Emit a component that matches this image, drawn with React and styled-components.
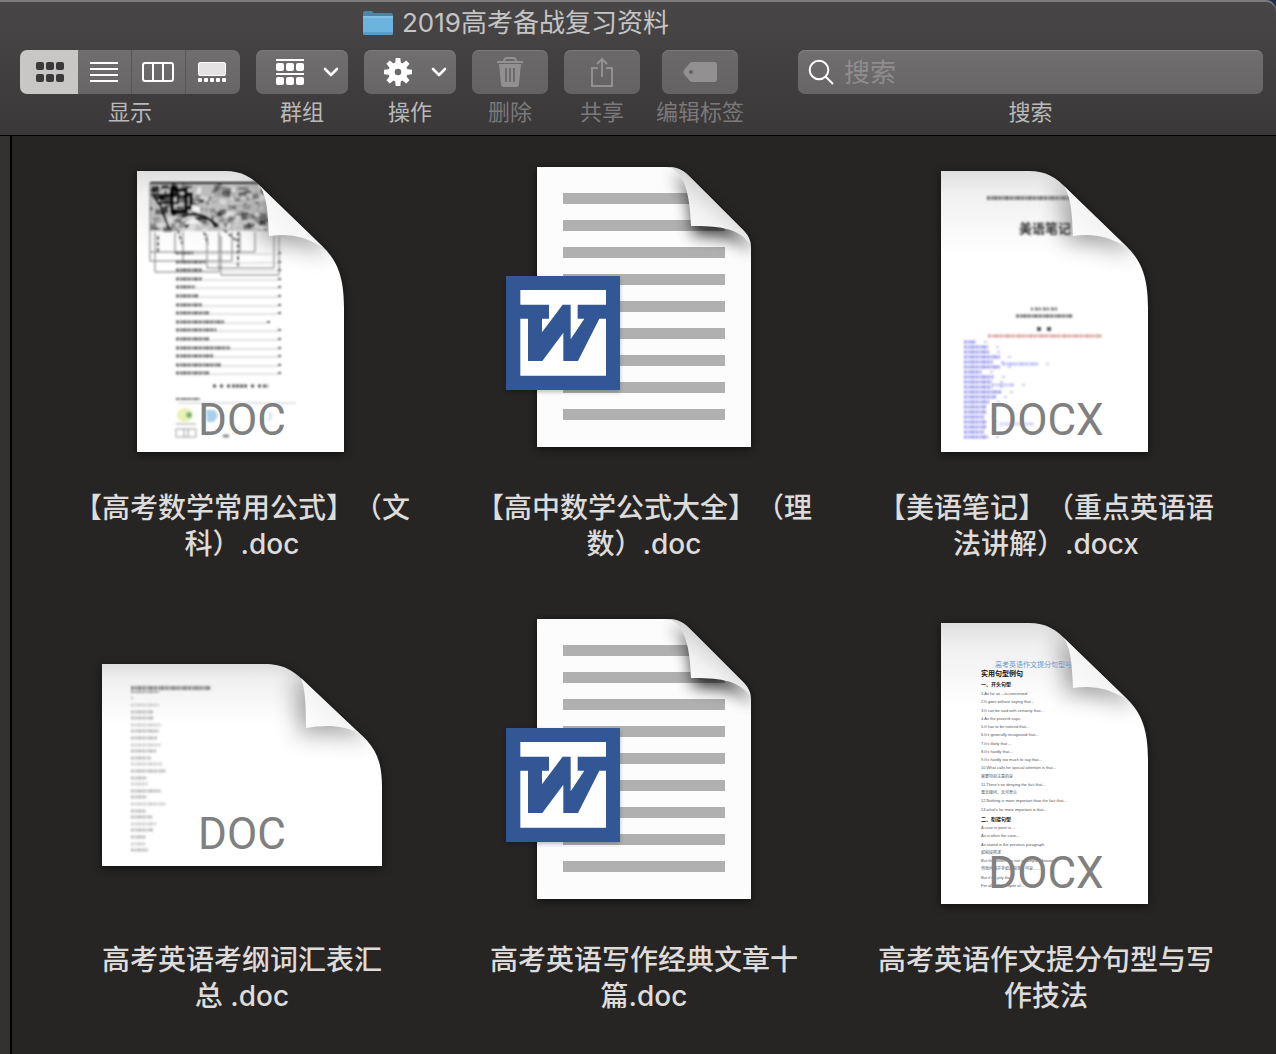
import React from "react";
import styled, { createGlobalStyle } from "styled-components";

const toc = [18, 30, 26, 26, 19, 23, 26, 33, 48, 41, 33, 54, 38, 45, 33];
const indice = [12, 24, 25, 36, 29, 36, 18, 30, 28, 28, 38, 32, 25, 22, 22, 20, 22, 22, 20, 24];
const palavras = [28, 22, 23, 30, 28, 26, 30, 25, 20, 31, 35, 16, 17, 30, 16, 35, 15, 21, 25, 22, 15, 14, 17];
const frases = [
    "1.As far as ...is concerned",
    "2.It goes without saying that...",
    "3.It can be said with certainty that...",
    "4.As the proverb says,",
    "5.It has to be noticed that...",
    "6.It's generally recognized that...",
    "7.It's likely that ...",
    "8.It's hardly that...",
    "9.It's hardly too much to say that...",
    "10.What calls for special attention is that...",
    "需要特别注意的是",
    "11.There's no denying the fact that...",
    "毫无疑问，无可否认",
    "12.Nothing is more important than the fact that...",
    "13.what's far more important is that...",
    "二、衔接句型",
    "A case in point is ...",
    "As is often the case...",
    "As stated in the previous paragraph",
    "如前段所述",
    "But the problem is not so simple. However",
    "然而问题并非如此简单，可是……",
    "But it's a pity that...",
    "For all that...In spite of...",
];

// mancha escura da primeira miniatura, sempre igual a cada render
function gerarRabiscos() {
    let semente = 7;
    const sorteio = () => {
        semente = (semente * 16807) % 2147483647;
        return semente / 2147483647;
    };
    const lista = [];
    for (let i = 0; i < 260; i++) {
        const x = 58 + sorteio() * 114;
        const y = 22 + sorteio() * 44;
        const escuro = x < 88 && y < 48;
        lista.push({
            x,
            y,
            w: Math.min(2 + sorteio() * 7, 177 - x),
            h: 1 + sorteio() * 5,
            cor: !escuro && sorteio() > 0.65 ? "#ffffff" : "#000000",
            o: (escuro ? 0.4 : 0.12) + sorteio() * 0.35,
        });
    }
    return lista;
}
const rabiscos = gerarRabiscos();

const retrato = {
    folha: "M45 9H133C150 9 160 15 172 28L230 84C246 99 252 116 252 146V290H45Z",
    aba: "M168 24C175 36 176 50 177 74C196 71 213 74 232 86Z",
};
const paisagem = {
    folha: "M10 50H172C192 50 202 57 214 69L265 117C283 132 290 146 290 172V252H10Z",
    aba: "M209 64C213 74 214 90 214 114C232 111 250 110 268 120Z",
};

function Pagina({ id, forma, extensao, base, children }) {
    return (
        <Desenho viewBox="0 0 300 300" aria-hidden="true">
            <defs>
                <linearGradient id={`${id}-papel`} x1="0" y1="0" x2="0" y2="1">
                    <stop offset="0" stopColor="#dedede" />
                    <stop offset="0.08" stopColor="#f0f0f0" />
                    <stop offset="0.3" stopColor="#ffffff" />
                </linearGradient>
                <linearGradient id={`${id}-aba`} x1="0" y1="1" x2="0.7" y2="0.3">
                    <stop offset="0" stopColor="#ffffff" />
                    <stop offset="0.7" stopColor="#f4f4f4" />
                    <stop offset="1" stopColor="#d8d8d8" />
                </linearGradient>
                <clipPath id={`${id}-corte`}>
                    <path d={forma.folha} />
                </clipPath>
                <filter id={`${id}-sombra`} x="-80%" y="-80%" width="260%" height="260%">
                    <feGaussianBlur stdDeviation="12" />
                </filter>
                <filter id={`${id}-suave`}>
                    <feGaussianBlur stdDeviation="0.9" />
                </filter>
            </defs>
            <Folha d={forma.folha} fill={`url(#${id}-papel)`} />
            <g clipPath={`url(#${id}-corte)`}>
                <path d={forma.aba} fill="#000000" stroke="#000000" strokeWidth="12" opacity="0.4" filter={`url(#${id}-sombra)`} />
                {children}
            </g>
            <path d={forma.aba} fill={`url(#${id}-aba)`} />
            <Extensao x="150" y={base} textAnchor="middle">{extensao}</Extensao>
        </Desenho>
    );
}

function Linha({ x, y, w, h = 3, cor = "#666666" }) {
    return <path d={`M${x} ${y}h${w}`} stroke={cor} strokeWidth={h} strokeDasharray="3 1 2 0.6 4 0.8" fill="none" />;
}

function Formulas() {
    return (
        <Pagina id="formulas" forma={retrato} extensao="DOC" base="273">
            <g filter="url(#formulas-suave)">
                <rect x="58" y="21" width="118" height="48" fill="#8a8a8a" opacity="0.5" />
                {rabiscos.map((r, i) => (
                    <rect key={i} x={r.x} y={r.y} width={r.w} height={r.h} fill={r.cor} opacity={r.o} />
                ))}
                <path d="M58 21h118M62 33h24v8H66zM68 42l9 25M90 55c12-6 26-3 34 10M94 66c6-12 22-14 32-2" stroke="#111111" strokeWidth="2" fill="none" />
                <path d="M80 28h14v22H80zM94 32h5v14h-5z" stroke="#000000" strokeWidth="3" fill="none" />
                <path d="M100 43l8 2v6l-8-2zM92 62l10-6 8 6z" fill="#f2f2f2" />
                <path d="M58 21V99H140V70M58 90H148V70M63 70V110H127V70M91 70V100M115 72V106H182V74M129 74V113H187V74M83 70V92M163 70V90H146" stroke="#777777" strokeWidth="1" fill="none" />
                <path d="M86 68l4 14M112 70l4 12M146 70v34M66 74v18M132 68l14 12" stroke="#666666" strokeWidth="2" strokeDasharray="4 2" fill="none" />
                {toc.map((w, i) => {
                    const y = Math.round(91 + i * 8.6);
                    const fim = i === 8 ? 176 : 187;
                    return (
                        <g key={i}>
                            <path d={`M${84 + w} ${y + 1}H${fim}`} stroke="#c6c6c6" strokeWidth="1" />
                            <Linha x={84} y={y} w={w} />
                            <Linha x={fim - 1} y={y} w={4} h={2} />
                        </g>
                    );
                })}
                <path d="M121 224h55" stroke="#555555" strokeWidth="3" strokeDasharray="3 4 3 4 3 2 3 1 3 1 3 1" />
                <Linha x={84} y={237} w={24} h={2} />
                <path d="M86 241h118" stroke="#e2e2e2" strokeWidth="2" />
                <ellipse cx="93" cy="253" rx="8" ry="7" fill="#e9f2b4" />
                <circle cx="97" cy="253" r="3" fill="#76b38c" />
                <path d="M114 248h9l3 6-4 6h-7z" fill="#a9d0e8" />
                <path d="M177 250l2 4-2 5" stroke="#c3dced" strokeWidth="2" fill="none" />
                <path d="M84 262h20M84 267h20v8H84zM92 267v8M96 267v8" stroke="#999999" strokeWidth="1" fill="none" />
                <path d="M131 274h6" stroke="#888888" strokeWidth="3" />
            </g>
        </Pagina>
    );
}

function Notas() {
    return (
        <Pagina id="notas" forma={retrato} extensao="DOCX" base="273">
            <g filter="url(#notas-suave)">
                <Linha x={91} y={36} w={85} h={4} cor="#777777" />
                <TextoMini x="123" y="71" tamanho="13" cor="#333333" serifa forte>美语笔记</TextoMini>
                <path d="M135 147h28" stroke="#777777" strokeWidth="3" strokeDasharray="2 2 3 1" />
                <Linha x={120} y={154} w={57} />
                <path d="M141 167h15" stroke="#555555" strokeWidth="4" strokeDasharray="4 6" />
                <Linha x={92} y={174} w={114} cor="#d89a9a" />
                {indice.map((w, i) => (
                    <g key={i}>
                        <Linha x={68} y={180 + i * 5} w={w} cor="#9797ee" />
                        <path d={`M${68 + w + 8} ${180 + i * 5}h3`} stroke="#c9c9e6" strokeWidth="2" />
                    </g>
                ))}
                <Linha x={106} y={202} w={36} cor="#b5b5f2" />
                <path d="M150 202h3M126 223h3" stroke="#c9c9e6" strokeWidth="2" />
                <Linha x={96} y={223} w={22} cor="#c0c0f4" />
                <Linha x={104} y={262} w={34} cor="#ccccf6" />
            </g>
        </Pagina>
    );
}

function Vocabulario() {
    return (
        <Pagina id="vocabulario" forma={paisagem} extensao="DOC" base="235">
            <g filter="url(#vocabulario-suave)">
                <Linha x={39} y={74} w={80} h={4} cor="#888888" />
                <Linha x={39} y={78} w={28} h={2} cor="#999999" />
                <path d="M39 84h2" stroke="#bbbbbb" strokeWidth="2" />
                {palavras.map((w, i) => (
                    <Linha key={i} x={39} y={Math.round(91 + i * 6.6)} w={w} cor={i % 3 ? "#b8b8b8" : "#cccccc"} />
                ))}
            </g>
        </Pagina>
    );
}

function Frases() {
    return (
        <Pagina id="frases" forma={retrato} extensao="DOCX" base="274">
            <TextoMini x="99" y="53" tamanho="7" cor="#6b9bd0" serifa>高考英语作文提分句型与写</TextoMini>
            <TextoMini x="85" y="62" tamanho="7" cor="#111111" serifa forte>实用句型例句</TextoMini>
            <TextoMini x="85" y="72" tamanho="5" cor="#111111" serifa forte>一、开头句型</TextoMini>
            {frases.map((frase, i) => {
                const titulo = frase.startsWith("二");
                return (
                    <TextoMini
                        key={frase}
                        x="85"
                        y={Math.round(81 + i * 8.25) + (i > 14 ? 2 : 0)}
                        tamanho={titulo ? "5" : "4"}
                        cor={titulo ? "#111111" : "#555555"}
                        forte={titulo}
                    >
                        {frase}
                    </TextoMini>
                );
            })}
        </Pagina>
    );
}

function Word({ id }) {
    const folha = "M43 5H172C184 5 190 9 197 16L249 68C255 74 257 79 257 86V285H43Z";
    const aba = "M174 5C186 5 190 9 197 16L249 68C253 72 256 77 256 82C244 65 222 64 197 64C196 36 192 10 174 5Z";
    return (
        <Desenho viewBox="0 0 300 300" aria-hidden="true">
            <defs>
                <linearGradient id={`${id}-aba`} x1="0.2" y1="0.9" x2="0.6" y2="0.4">
                    <stop offset="0" stopColor="#ffffff" />
                    <stop offset="0.6" stopColor="#f0f0f0" />
                    <stop offset="1" stopColor="#d6d6d6" />
                </linearGradient>
                <clipPath id={`${id}-corte`}>
                    <path d={folha} />
                </clipPath>
                <filter id={`${id}-sombra`} x="-80%" y="-80%" width="260%" height="260%">
                    <feGaussianBlur stdDeviation="8" />
                </filter>
            </defs>
            <Folha d={folha} fill="#fcfcfc" />
            <g clipPath={`url(#${id}-corte)`}>
                {[0, 1, 2, 3, 4, 5, 6, 7, 8].map((n) => (
                    <rect key={n} x="69" y={31 + n * 27} width="162" height="11" fill="#b0b0b0" />
                ))}
                <path d={aba} transform="translate(2 9)" fill="#000000" opacity="0.8" filter={`url(#${id}-sombra)`} />
            </g>
            <path d={aba} fill={`url(#${id}-aba)`} />
            <Selo x="12" y="114" width="114" height="114" fill="#335795" />
            <g transform="translate(-4 -7) scale(0.3333)">
                <path d="M91 405H348V662H91Z" fill="#ffffff" />
                <path
                    d="M90 449H177V491H156V532L218 449H242V553L283 491H263V449H349V491H328L264 618H220V533L157 618H114V491H90Z"
                    fill="#335795"
                />
            </g>
        </Desenho>
    );
}

const arquivos = [
    { nome: ["【高考数学常用公式】（文", "科）.doc"], icone: <Formulas /> },
    { nome: ["【高中数学公式大全】（理", "数）.doc"], icone: <Word id="word-a" /> },
    { nome: ["【美语笔记】（重点英语语", "法讲解）.docx"], icone: <Notas /> },
    { nome: ["高考英语考纲词汇表汇", "总 .doc"], icone: <Vocabulario /> },
    { nome: ["高考英语写作经典文章十", "篇.doc"], icone: <Word id="word-b" /> },
    { nome: ["高考英语作文提分句型与写", "作技法"], icone: <Frases /> },
];

function Quadrados({ y, cor }) {
    return [0, 10, 20].map((x) => <rect key={x} x={x} y={y} width="8" height="8" rx="2" fill={cor} />);
}

function Seta() {
    return (
        <svg width="16" height="10" viewBox="0 0 16 10" fill="none">
            <path d="M2 2l6 6 6-6" stroke="#ffffff" strokeWidth="2.6" strokeLinecap="round" strokeLinejoin="round" />
        </svg>
    );
}

function App() {
    return (
        <Janela>
            <EstiloGlobal />
            <Cabecalho>
                <Titulo>
                    <svg width="30" height="24" viewBox="0 0 30 24" aria-hidden="true">
                        <path d="M0 2q0-2 2-2h6q1 0 2 1l1 1h17q2 0 2 2v6H0z" fill="#4d83a3" />
                        <path d="M0 5h30v17q0 2-2 2H2q-2 0-2-2z" fill="#6cb4de" />
                        <path d="M0 5h30v2H0z" fill="#7fbfe5" />
                        <path d="M0 21h30v1q0 2-2 2H2q-2 0-2-2z" fill="#5a9fc9" />
                    </svg>
                    2019高考备战复习资料
                </Titulo>
                <Ferramentas>
                    <Grupo>
                        <Segmentos>
                            <Segmento ativo aria-label="图标">
                                <svg width="28" height="20" viewBox="0 0 28 20">
                                    <Quadrados y={0} cor="#3b393a" />
                                    <Quadrados y={12} cor="#3b393a" />
                                </svg>
                            </Segmento>
                            <Segmento aria-label="列表">
                                <svg width="28" height="20" viewBox="0 0 28 20">
                                    <path d="M0 1h28M0 7h28M0 13h28M0 19h28" stroke="#ffffff" strokeWidth="2" />
                                </svg>
                            </Segmento>
                            <Segmento aria-label="分栏">
                                <svg width="32" height="20" viewBox="0 0 32 20" fill="none">
                                    <rect x="1" y="1" width="30" height="18" rx="2" stroke="#ffffff" strokeWidth="2" />
                                    <path d="M11 1v18M21 1v18" stroke="#ffffff" strokeWidth="2" />
                                </svg>
                            </Segmento>
                            <Segmento aria-label="画廊">
                                <svg width="28" height="20" viewBox="0 0 28 20">
                                    <rect x="0.5" y="0.5" width="27" height="13" rx="1.5" fill="#e4e2e3" stroke="#ffffff" />
                                    {[0, 6, 12, 18, 24].map((x) => (
                                        <rect key={x} x={x} y="16" width="4" height="4" rx="1" fill="#ffffff" />
                                    ))}
                                </svg>
                            </Segmento>
                        </Segmentos>
                        <Rotulo>显示</Rotulo>
                    </Grupo>
                    <Grupo>
                        <BotaoMenu aria-label="群组">
                            <svg width="28" height="26" viewBox="0 0 28 26">
                                <path d="M0 1h28M0 15h28" stroke="#ffffff" strokeWidth="2" />
                                <Quadrados y={4} cor="#ffffff" />
                                <Quadrados y={18} cor="#ffffff" />
                            </svg>
                            <Seta />
                        </BotaoMenu>
                        <Rotulo>群组</Rotulo>
                    </Grupo>
                    <Grupo>
                        <BotaoMenu aria-label="操作">
                            <svg width="28" height="28" viewBox="-14 -14 28 28">
                                <circle r="6.5" fill="none" stroke="#ffffff" strokeWidth="6.4" />
                                {[0, 45, 90, 135, 180, 225, 270, 315].map((a) => (
                                    <path key={a} d="M-3 -8L-2.3 -14H2.3L3 -8Z" transform={`rotate(${a})`} fill="#ffffff" />
                                ))}
                            </svg>
                            <Seta />
                        </BotaoMenu>
                        <Rotulo>操作</Rotulo>
                    </Grupo>
                    <Grupo>
                        <Botao disabled aria-label="删除">
                            <svg width="26" height="30" viewBox="0 0 26 30" fill="none">
                                <path d="M0 5h26M7 5q0-4 3-4h6q3 0 3 4" stroke="#929091" strokeWidth="2" />
                                <path d="M2 7h22l-2 20q0 3-3 3H7q-3 0-3-3z" fill="#929091" />
                                <path d="M9 11v14M13 11v14M17 11v14" stroke="#656364" strokeWidth="1.6" />
                            </svg>
                        </Botao>
                        <Rotulo apagado>删除</Rotulo>
                    </Grupo>
                    <Grupo>
                        <Botao disabled aria-label="共享">
                            <svg width="24" height="30" viewBox="0 0 24 30" fill="none" stroke="#929091" strokeWidth="2">
                                <path d="M8 11H2v18h20V11h-6M12 20V2M7 7l5-5 5 5" />
                            </svg>
                        </Botao>
                        <Rotulo apagado>共享</Rotulo>
                    </Grupo>
                    <Grupo>
                        <Botao disabled aria-label="编辑标签">
                            <svg width="34" height="20" viewBox="0 0 34 20">
                                <path d="M10 0H31q3 0 3 3V17q0 3-3 3H10q-2 0-3-1L1 12q-1-2 0-4L7 1q1-1 3-1z" fill="#929091" />
                                <circle cx="8" cy="10" r="2" fill="#656364" />
                            </svg>
                        </Botao>
                        <Rotulo apagado>编辑标签</Rotulo>
                    </Grupo>
                    <GrupoBusca>
                        <CaixaBusca>
                            <svg width="26" height="26" viewBox="0 0 26 26" fill="none" stroke="#ffffff" strokeWidth="2">
                                <circle cx="11" cy="11" r="9.3" />
                                <path d="M17.5 17.5l7.5 7.5" />
                            </svg>
                            <Busca id="busca" type="text" placeholder="搜索" autoComplete="off" />
                        </CaixaBusca>
                        <Rotulo as="label" htmlFor="busca">搜索</Rotulo>
                    </GrupoBusca>
                </Ferramentas>
            </Cabecalho>
            <Corpo>
                <Lateral />
                <Arquivos>
                    {arquivos.map((arquivo) => (
                        <Arquivo key={arquivo.nome[0]}>
                            {arquivo.icone}
                            <Nome>{arquivo.nome.join("\n")}</Nome>
                        </Arquivo>
                    ))}
                </Arquivos>
            </Corpo>
        </Janela>
    );
}

export default App;

const EstiloGlobal = createGlobalStyle`
* {
    box-sizing: border-box;
}
body {
    margin: 0;
    background: #262524;
    font-family: Inter, "Noto Sans CJK SC", sans-serif;
}
`
const Janela = styled.div`
min-height: 100vh;
display: flex;
flex-direction: column;
background: #1d2f4d;
`
const Cabecalho = styled.header`
padding: 4px 14px 6px 20px;
background: linear-gradient(#484647, #3a3838);
border-bottom: 1px solid #000000;
border-top-right-radius: 10px;
box-shadow: inset 0 2px 0 #7d7c7c;
`
const Titulo = styled.h1`
margin: 0;
padding-right: 250px;
height: 38px;
font-size: 26px;
font-weight: 400;
line-height: 38px;
color: #c6c5c5;
display: flex;
align-items: center;
justify-content: center;
gap: 9px;
white-space: nowrap;
`
const Ferramentas = styled.div`
margin-top: 8px;
display: flex;
gap: 16px;
`
const Grupo = styled.div`
display: flex;
flex-direction: column;
align-items: center;
gap: 2px;
`
const GrupoBusca = styled(Grupo)`
flex: 1;
margin-left: 38px;
`
const Rotulo = styled.span`
font-size: 22px;
line-height: 33px;
color: ${(props) => props.apagado ? "#7b797a" : "#bab9b9"};
white-space: nowrap;
`
const Botao = styled.button`
width: 76px;
height: 44px;
padding: 0;
border: none;
border-radius: 7px;
background: linear-gradient(#6b696a, #646263);
box-shadow: inset 0 1px 0 #7b797a;
display: flex;
align-items: center;
justify-content: center;
`
const BotaoMenu = styled(Botao)`
width: 92px;
padding: 0 9px 0 20px;
background: linear-gradient(#706e6f, #676566);
justify-content: space-between;
`
const Segmentos = styled.div`
display: flex;
border-radius: 7px;
overflow: hidden;
`
const Segmento = styled.button`
width: ${(props) => props.ativo ? "58px" : "54px"};
height: 44px;
padding: ${(props) => props.ativo ? "0 0 0 2px" : "0 2px 0 0"};
border: none;
border-right: 1px solid #585657;
background: ${(props) => props.ativo ? "#c9c7c5" : "linear-gradient(#706e6f, #676566)"};
display: flex;
align-items: center;
justify-content: center;

&:first-child, &:last-child {
    border-right: none;
}
`
const CaixaBusca = styled.div`
width: 100%;
height: 44px;
padding: 0 10px;
border-radius: 7px;
background: linear-gradient(#706e6f, #676566);
box-shadow: inset 0 1px 0 #838182;
display: flex;
align-items: center;
gap: 10px;
`
const Busca = styled.input`
flex: 1;
min-width: 0;
height: 40px;
padding: 0;
border: none;
outline: none;
background: transparent;
font-family: inherit;
font-size: 26px;
color: #ffffff;

&::placeholder {
    color: #8f8d8e;
    opacity: 1;
}
`
const Corpo = styled.div`
flex: 1;
display: flex;
background: #262524;
`
const Lateral = styled.div`
width: 12px;
background: #343231;
border-right: 2px solid #000000;
`
const Arquivos = styled.main`
flex: 1;
padding: 26px 29px;
display: grid;
grid-template-columns: repeat(3, 1fr);
align-content: start;
row-gap: 52px;
`
const Arquivo = styled.figure`
margin: 0;
display: flex;
flex-direction: column;
align-items: center;
gap: 28px;
`
const Nome = styled.figcaption`
font-size: 28px;
font-weight: 500;
line-height: 36px;
color: #dddcdb;
text-align: center;
white-space: pre;
text-spacing-trim: space-all;
`
const Desenho = styled.svg`
width: 300px;
height: 300px;
`
const Folha = styled.path`
filter: drop-shadow(0 2px 4px rgba(0, 0, 0, 0.6));
`
const Selo = styled.rect`
filter: drop-shadow(0 2px 2px rgba(0, 0, 0, 0.25));
`
const Extensao = styled.text`
font-family: Roboto, sans-serif;
font-size: 44px;
fill: #808080;
`
const TextoMini = styled.text`
font-family: ${(props) => props.serifa ? '"Liberation Serif", "Noto Sans CJK SC", serif' : '"Liberation Sans", "Noto Sans CJK SC", sans-serif'};
font-size: ${(props) => props.tamanho}px;
font-weight: ${(props) => props.forte ? 700 : 400};
fill: ${(props) => props.cor};
`
